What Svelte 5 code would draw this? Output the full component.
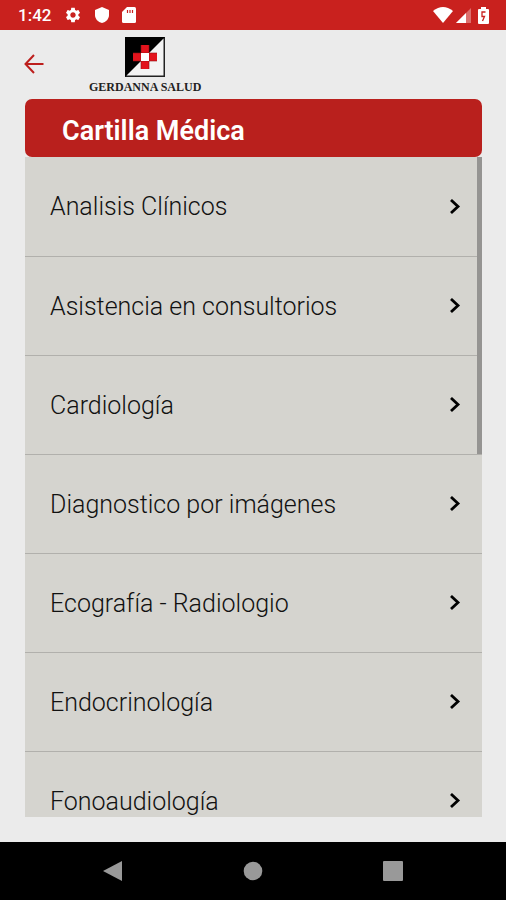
<script>
	const specialties = [
		'Analisis Clínicos',
		'Asistencia en consultorios',
		'Cardiología',
		'Diagnostico por imágenes',
		'Ecografía - Radiologio',
		'Endocrinología',
		'Fonoaudiología'
	];
</script>

<div class="screen">
	<div class="status">
		<span class="time">1:42</span>
		<svg width="18" height="18" viewBox="0 0 24 24" fill="#fff">
			<path d="M19.14 12.94c.04-.3.06-.61.06-.94s-.02-.64-.07-.94l2.03-1.58c.18-.14.23-.41.12-.61l-1.92-3.32c-.12-.22-.37-.29-.59-.22l-2.39.96c-.5-.38-1.03-.7-1.62-.94l-.36-2.54c-.04-.24-.24-.41-.48-.41h-3.84c-.24 0-.43.17-.47.41l-.36 2.54c-.59.24-1.13.57-1.62.94l-2.39-.96c-.22-.08-.47 0-.59.22L2.74 8.87c-.12.21-.08.47.12.61l2.03 1.58c-.05.3-.09.63-.09.94s.02.64.07.94l-2.03 1.58c-.18.14-.23.41-.12.61l1.92 3.32c.12.22.37.29.59.22l2.39-.96c.5.38 1.03.7 1.62.94l.36 2.54c.05.24.24.41.48.41h3.84c.24 0 .44-.17.47-.41l.36-2.54c.59-.24 1.13-.56 1.62-.94l2.39.96c.22.08.47 0 .59-.22l1.92-3.32c.12-.22.07-.47-.12-.61l-2.01-1.58zM12 15.6c-1.98 0-3.6-1.62-3.6-3.6s1.62-3.6 3.6-3.6 3.6 1.62 3.6 3.6-1.62 3.6-3.6 3.6z" />
		</svg>
		<svg width="14" height="16" viewBox="0 0 14 16" fill="#fff">
			<path d="M7 0l7 3v5c0 4-3 7-7 8-4-1-7-4-7-8V3z" />
		</svg>
		<svg width="14" height="16" viewBox="0 0 14 16" fill="#fff">
			<path d="M5 0h7.500Q14 0 14 1.500v13Q14 16 12.500 16h-11Q0 16 0 14.500V5z" />
			<path d="M5.500 3v3M8 3v3M10.500 3v3" stroke="#c9211e" stroke-width="1.200" />
		</svg>
		<div class="signals">
			<svg width="20" height="16" viewBox="0 0 20 16" fill="#fff">
				<path d="M0 4Q10-4 20 4L10 16z" />
			</svg>
			<svg width="15" height="15" viewBox="0 0 15 15">
				<path d="M0 15L15 0v15z" fill="#fff" fill-opacity=".35" />
				<path d="M0 15L10 5v10z" fill="#fff" />
			</svg>
			<svg class="battery" width="11" height="17" viewBox="0 0 11 17">
				<path d="M3 0h5v2h2q1 0 1 1v13q0 1-1 1H1q-1 0-1-1V3q0-1 1-1h2z" fill="#fff" />
				<path d="M7.500 5H4v4.500h2.500L4.500 14" fill="none" stroke="#c9211e" stroke-width="1.300" />
			</svg>
		</div>
	</div>

	<header>
		<button class="back" aria-label="Volver">
			<svg width="20" height="20" viewBox="0 0 20 20" fill="none" stroke="#bd1f1d" stroke-width="2">
				<path d="M19.500 10H1.500M10 1L1.500 10L10 19" />
			</svg>
		</button>
		<div class="brand">
			<svg width="40" height="40" viewBox="0 0 40 40">
				<rect x=".75" y=".75" width="38.500" height="38.500" fill="#f3f3f3" stroke="#222" stroke-width="1.500" />
				<path d="M0 0h40L0 40z" fill="#000" />
				<path d="M16 8h8v8h8v8h-8v8h-8v-8H8v-8h8z" fill="#e3131c" />
				<path d="M16 8v24M24 8v24M8 16h24M8 24h24" stroke="#8e1016" stroke-width=".6" />
				<rect x="16" y="16" width="8" height="8" fill="#fff" />
			</svg>
			<span>GERDANNA SALUD</span>
		</div>
	</header>

	<main>
		<h1>Cartilla Médica</h1>
		<div class="list">
			<ul>
				{#each specialties as name}
					<li>
						<button class="row">
							<span>{name}</span>
							<svg width="12" height="16" viewBox="0 0 12 16" fill="none" stroke="#000" stroke-width="2.800">
								<path d="M2 1L9 7.500L2 14" />
							</svg>
						</button>
					</li>
				{/each}
			</ul>
			<div class="thumb"></div>
		</div>
	</main>

	<nav>
		<button aria-label="Atrás">
			<svg width="20" height="22" viewBox="0 0 20 22" fill="#999"><path d="M0 11L19 1v20z" /></svg>
		</button>
		<button aria-label="Inicio">
			<svg width="20" height="20" viewBox="0 0 20 20" fill="#999"><circle cx="10" cy="10" r="9.300" /></svg>
		</button>
		<button aria-label="Recientes">
			<svg width="20" height="20" viewBox="0 0 20 20" fill="#999"><rect width="20" height="20" rx="1" /></svg>
		</button>
	</nav>
</div>

<style>
:global(body) {
  margin: 0;
}
.screen {
  display: flex;
  flex-direction: column;
  height: 100vh;
  background: #ebebeb;
  font-family: Roboto, "Liberation Sans", sans-serif;
}
button {
  padding: 0;
  border: 0;
  background: none;
  font: inherit;
  color: inherit;
  cursor: pointer;
}
svg {
  display: block;
  flex: none;
}
.status {
  display: flex;
  align-items: center;
  gap: 13px;
  height: 30px;
  padding: 0 17px 0 18px;
  background: #c9211e;
  color: #fff;
}
.time {
  font-size: 17px;
  font-weight: 500;
}
.signals {
  display: flex;
  align-items: center;
  gap: 3px;
  margin-left: auto;
}
.battery {
  margin-left: 4px;
}

header {
  display: flex;
  gap: 45px;
  height: 62px;
  padding: 7px 24px 0;
}
.back {
  height: 54px;
}
.brand {
  display: flex;
  flex-direction: column;
  align-items: center;
  font-family: "Liberation Serif", serif;
  font-size: 12px;
  line-height: 20px;
  font-weight: bold;
  color: #222;
}

main {
  display: flex;
  flex-direction: column;
  flex: 1;
  min-height: 0;
  margin: 0 24px 25px 25px;
}
h1 {
  margin: 0;
  padding: 6px 37px 0;
  border-radius: 7px;
  background: #b9201d;
  color: #fff;
  font-size: 27px;
  line-height: 52px;
  font-weight: 600;
}
.list {
  position: relative;
  flex: 1;
  min-height: 0;
  background: #d5d4cf;
}
ul {
  height: 100%;
  margin: 0;
  padding: 0;
  overflow-y: auto;
  scrollbar-width: none;
  list-style: none;
}
.row {
  display: flex;
  align-items: center;
  justify-content: space-between;
  box-sizing: border-box;
  width: 100%;
  height: 99px;
  padding: 0 21px 0 25px;
  color: #111;
  font-size: 25px;
  font-weight: 300;
  text-align: left;
}
li + li .row {
  border-top: 1px solid #b1b0ac;
}
.thumb {
  position: absolute;
  top: 0;
  right: 0;
  width: 5px;
  height: 45%;
  background: #959492;
}

nav {
  display: flex;
  align-items: center;
  justify-content: center;
  gap: 120px;
  height: 58px;
  background: #000;
}
</style>
